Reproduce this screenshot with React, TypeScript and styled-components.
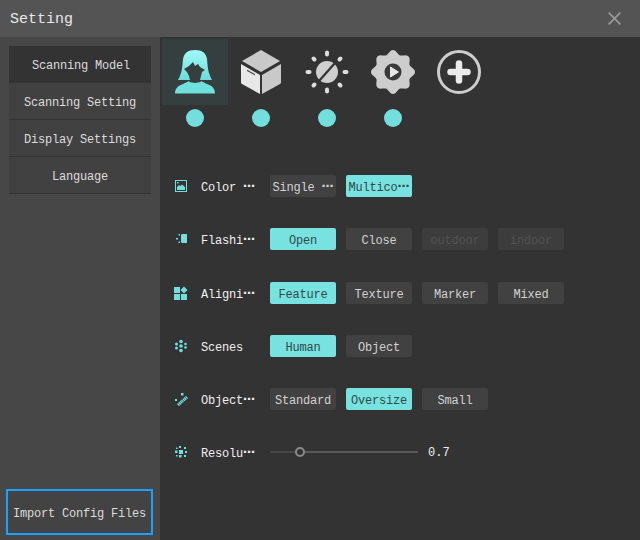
import React from "react";
import styled, { createGlobalStyle } from "styled-components";

const Global = createGlobalStyle`
  html, body { margin: 0; padding: 0; background: #333; }
  #root { width: 640px; height: 540px; overflow: hidden; }
  * { box-sizing: border-box; }
`;
const MONO = `"Liberation Mono", "DejaVu Sans Mono", monospace`;

const Window = styled.div`
  width: 640px; height: 540px; display: flex; flex-direction: column;
  font-family: ${MONO}; font-size: 12px; letter-spacing: -0.2px; color: #ddd; background: #333;
`;
const TitleBar = styled.header`
  height: 37px; flex: none; background: #545454; display: flex; align-items: center;
  justify-content: space-between; padding: 0 19px 0 10px;
`;
const Title = styled.h1`
  margin: 0; padding-top: 2px; font-size: 15px; font-weight: 400; letter-spacing: 0; color: #e8e8e8; font-family: ${MONO};
`;
const CloseBtn = styled.svg`width: 13px; height: 13px; display: block; margin-top: -1px;`;
const Body = styled.div`flex: 1; display: flex; min-height: 0;`;
const Sidebar = styled.nav`
  width: 160px; flex: none; background: #474747; display: flex; flex-direction: column;
  padding: 9px 7px 5px 9px;
`;
const MenuItem = styled.div<{ $active?: boolean }>`
  height: 37px; width: 142px; display: flex; align-items: center; justify-content: center;
  background: ${(p) => (p.$active ? "#333" : "#414141")};
  border-bottom: ${(p) => (p.$active ? "none" : "1px solid #333")};
  color: #dcdcdc; padding: 3px 0 0 ${(p) => (p.$active ? 2 : 0)}px;
`;
const ImportBtn = styled.button`
  margin: auto 0 0 -3px; width: 147px; height: 46px; background: #434343; border: 2px solid #1e9fff;
  color: #dcdcdc; font: inherit; letter-spacing: -0.2px; padding: 3px 0 0; white-space: nowrap;
`;
const Main = styled.main`flex: 1; padding: 2px 0 0 2px; display: flex; flex-direction: column;`;
const Tabs = styled.div`display: flex;`;
const Tab = styled.div`width: 66px; display: flex; flex-direction: column; align-items: center; gap: 4px;`;
const TabIcon = styled.div<{ $active?: boolean }>`
  width: 66px; height: 66px;
  background: ${(p) => (p.$active ? "#363f40" : "transparent")};
`;
const TabSvg = styled.svg`width: 66px; height: 66px; display: block;`;
const Dot = styled.span`width: 18px; height: 18px; border-radius: 50%; background: #72dfdc; display: block;`;
const Rows = styled.div`margin-top: 48px; display: flex; flex-direction: column; gap: 31px; padding-left: 12px;`;
const Row = styled.div<{ $nudge?: boolean }>`
  height: 22px; display: flex; align-items: center; margin-top: ${(p) => (p.$nudge ? 1 : 0)}px;
`;
const RowIcon = styled.svg`width: 14px; height: 14px; flex: none; margin-right: 13px; display: block;`;
const Label = styled.span`
  width: 69px; flex: none; color: #f0f0f0; white-space: nowrap; display: flex; align-items: center; padding-top: 4px;
`;
const Dots = styled.span`
  font-family: "DejaVu Sans", sans-serif; font-weight: 700; letter-spacing: 0; font-size: 12px; line-height: 1;
  margin-bottom: 5px;
`;
const Options = styled.div`display: flex; gap: 10px;`;
const Option = styled.div<{ $on?: boolean; $off?: boolean }>`
  width: 66px; height: 22px; border-radius: 2px; display: flex; align-items: center; justify-content: center;
  white-space: nowrap; overflow: hidden; padding-top: 4px;
  background: ${(p) => (p.$on ? "#77e2df" : p.$off ? "#3d3d3d" : "#414141")};
  color: ${(p) => (p.$on ? "#2f4a4a" : p.$off ? "#525252" : "#d2d2d2")};
`;
const SliderRow = styled.div`display: flex; align-items: center; gap: 10px;`;
const Track = styled.div`
  position: relative; width: 148px; height: 2px; border-radius: 1px;
  background: linear-gradient(to right, #474747 0 30px, #5a5a5a 30px);
`;
const Thumb = styled.span`
  position: absolute; left: 25px; top: -4px; width: 10px; height: 10px; border-radius: 50%;
  background: #333; border: 2px solid #8a8a8a;
`;
const Value = styled.span`color: #eee; letter-spacing: 0; padding-top: 2px;`;

const T = "#72dfdc";

const gearPath = (() => {
  const pts: string[] = [];
  for (let i = 0; i < 120; i++) {
    const a = (i / 120) * Math.PI * 2;
    const r = 20 + 2 * Math.cos(8 * a);
    pts.push(`${(33 + r * Math.sin(a)).toFixed(2)} ${(33 + r * Math.cos(a)).toFixed(2)}`);
  }
  return `M${pts.join("L")}Z`;
})();

const Person = () => (
  <TabSvg viewBox="0 0 66 66">
    <defs>
      <linearGradient id="pg" x1="0" y1="0" x2="0" y2="1">
        <stop offset="0" stopColor="#a2faf7" />
        <stop offset="1" stopColor="#6cdcd8" />
      </linearGradient>
    </defs>
    <path fill="url(#pg)" d="M33 11c-7 0-11 3-12 9-.5 6-1 11-2 14-1 3-2 5-3 7h34c-1-2-2-4-3-7-1-3-1.500-8-2-14-1-6-5-9-12-9z" />
    <path fill="#70e0dc" d="M13 54.500c0-5 3-8 8-9.500l6-3h12l6 3c5 1.500 8 4.500 8 9.500z" />
    <path fill="#363f40" d="M31 23l2 4 3-2 2 3 5 3-3 2-1 4-1 4 1 2-6 1-6-1 1-2-1-4-2-4-3-3 5-3z" />
  </TabSvg>
);
const Box = () => (
  <TabSvg viewBox="0 0 66 66">
    <path fill="#c9c9c9" d="M33 11L52 22 33 33 14 22z" />
    <path fill="#e8e8e8" d="M13 25l19 11v19L14 45c-.7-.4-1-1-1-2z" />
    <path fill="#c9c9c9" d="M53 25L34 36v19l18-10c.7-.4 1-1 1-2z" />
    <path fill="#555" d="M19 30.500l8 4.500v1.500l-8-4.500z" />
  </TabSvg>
);
const Sun = () => (
  <TabSvg viewBox="0 0 66 66">
    <circle cx="33" cy="33" r="11" fill="#cfcfcf" />
    <path stroke="#333" strokeWidth="2.200" d="M25 42L41 24" />
    <g stroke="#dedede" strokeWidth="4" strokeLinecap="round">
      <path d="M33 13.500v2M33 50.500v2M13.500 33h2M50.500 33h2M19.500 19.500l1 1M45.500 45.500l1 1M19.500 46.500l1-1M45.500 20.500l1-1" />
    </g>
  </TabSvg>
);
const Gear = () => (
  <TabSvg viewBox="0 0 66 66">
    <path fill="#cdcdcd" d={gearPath} />
    <circle cx="33" cy="33" r="8.500" fill="#3a3a3a" />
    <path fill="#e6e6e6" stroke="#e6e6e6" strokeLinejoin="round" d="M30.500 28L38.500 33l-8 5z" />
  </TabSvg>
);
const Plus = () => (
  <TabSvg viewBox="0 0 66 66">
    <circle cx="33" cy="33" r="20.500" fill="none" stroke="#cdcdcd" strokeWidth="3" />
    <path stroke="#ececec" strokeWidth="6.500" strokeLinecap="round" fill="none" d="M33 24.500v17M24.500 33h17" />
  </TabSvg>
);

const IcoColor = () => (
  <RowIcon viewBox="0 0 14 14">
    <rect x="1.500" y="1.500" width="11" height="11" fill="none" stroke={T} />
    <path fill={T} d="M3 11V8l2-2 1.500 1L8 5.500l3 2.500v3z" />
    <rect x="3" y="3" width="1.500" height="1.500" fill={T} />
  </RowIcon>
);
const IcoFlash = () => (
  <RowIcon viewBox="0 0 14 14">
    <path fill={T} d="M8 2h5v9H8L7 10V3z" />
    <path fill={T} d="M2 6h2v1.500H2zM4.500 2h1.500v1.500H4.500zM4.500 9.500h1.500V11H4.500z" />
  </RowIcon>
);
const IcoAlign = () => (
  <RowIcon viewBox="0 0 14 14">
    <path fill={T} d="M0 1h6v6H0zM0 8h6v6H0zM7 8h6v6H7zM10 .5L13.500 4 10 7.500 6.500 4z" />
  </RowIcon>
);
const IcoScenes = () => (
  <RowIcon viewBox="0 0 14 14">
    <g fill={T}>
      <circle cx="7" cy="2.500" r="1.800" /><circle cx="2.500" cy="5" r="1.500" /><circle cx="11.500" cy="5" r="1.300" />
      <circle cx="7" cy="7" r="1.800" /><circle cx="2.500" cy="9" r="1.500" /><circle cx="11.500" cy="8.500" r="1.300" /><circle cx="7" cy="11.500" r="1.800" />
    </g>
  </RowIcon>
);
const IcoObject = () => (
  <RowIcon viewBox="0 0 14 14">
    <path stroke={T} strokeWidth="3" strokeDasharray="1.300 .5" fill="none" d="M4 13l9-8" />
    <path fill={T} d="M7 1h2.500v2.500H7zM1 7h2v2H1z" />
  </RowIcon>
);
const IcoRes = () => (
  <RowIcon viewBox="0 0 14 14">
    <g fill={T}>
      <rect x="5" y="5" width="4" height="4" /><rect x="1" y="5.500" width="2.500" height="2.500" /><rect x="10" y="2" width="2" height="2" />
      <rect x="5" y="1" width="2" height="2" /><rect x="11" y="6" width="2" height="2" /><rect x="5" y="10" width="2.500" height="2.500" />
      <rect x="2" y="10" width="1.500" height="1.500" /><rect x="10" y="10" width="2" height="2" /><rect x="2" y="2.500" width="1.500" height="1.500" />
    </g>
  </RowIcon>
);

const More = () => <Dots>⋯</Dots>;

export default function App() {
  return (
    <Window>
      <Global />
      <TitleBar>
        <Title>Setting</Title>
        <CloseBtn viewBox="0 0 13 13">
          <path stroke="#989898" strokeWidth="1.800" d="M.7.7l11.600 11.600M12.300.7L.7 12.300" />
        </CloseBtn>
      </TitleBar>
      <Body>
        <Sidebar>
          <MenuItem $active>Scanning Model</MenuItem>
          <MenuItem>Scanning Setting</MenuItem>
          <MenuItem>Display Settings</MenuItem>
          <MenuItem>Language</MenuItem>
          <ImportBtn>Import Config Files</ImportBtn>
        </Sidebar>
        <Main>
          <Tabs>
            <Tab><TabIcon $active><Person /></TabIcon><Dot /></Tab>
            <Tab><TabIcon><Box /></TabIcon><Dot /></Tab>
            <Tab><TabIcon><Sun /></TabIcon><Dot /></Tab>
            <Tab><TabIcon><Gear /></TabIcon><Dot /></Tab>
            <Tab><TabIcon><Plus /></TabIcon></Tab>
          </Tabs>
          <Rows>
            <Row>
              <IcoColor /><Label>Color&nbsp;<More /></Label>
              <Options>
                <Option>Single&nbsp;<More /></Option>
                <Option $on>Multico<More /></Option>
              </Options>
            </Row>
            <Row>
              <IcoFlash /><Label>Flashi<More /></Label>
              <Options>
                <Option $on>Open</Option><Option>Close</Option>
                <Option $off>outdoor</Option><Option $off>indoor</Option>
              </Options>
            </Row>
            <Row $nudge>
              <IcoAlign /><Label>Aligni<More /></Label>
              <Options>
                <Option $on>Feature</Option><Option>Texture</Option>
                <Option>Marker</Option><Option>Mixed</Option>
              </Options>
            </Row>
            <Row>
              <IcoScenes /><Label>Scenes</Label>
              <Options><Option $on>Human</Option><Option>Object</Option></Options>
            </Row>
            <Row>
              <IcoObject /><Label>Object<More /></Label>
              <Options>
                <Option>Standard</Option><Option $on>Oversize</Option><Option>Small</Option>
              </Options>
            </Row>
            <Row>
              <IcoRes /><Label>Resolu<More /></Label>
              <SliderRow>
                <Track><Thumb /></Track>
                <Value>0.7</Value>
              </SliderRow>
            </Row>
          </Rows>
        </Main>
      </Body>
    </Window>
  );
}
